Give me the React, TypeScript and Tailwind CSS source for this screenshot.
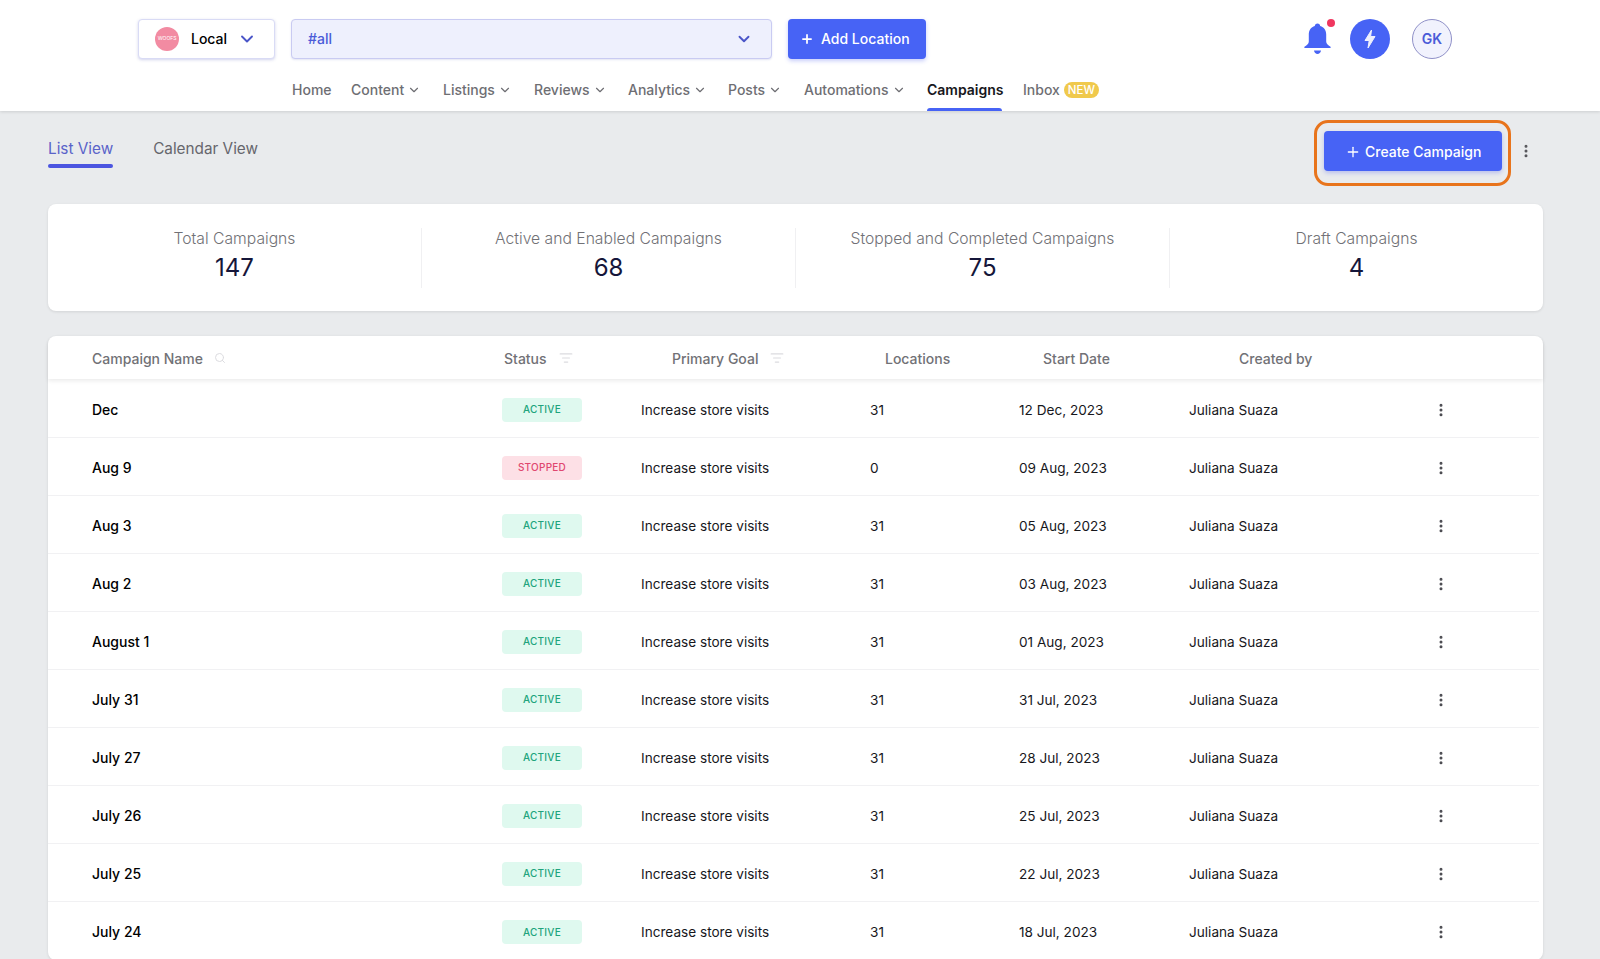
import React from 'react';
import { ChevronDown, Plus, Search, EllipsisVertical, ListFilter } from 'lucide-react';

const navItems = [
  { label: 'Home', width: 'w-[59px]' },
  { label: 'Content', caret: true, width: 'w-[92px]' },
  { label: 'Listings', caret: true, width: 'w-[91px]' },
  { label: 'Reviews', caret: true, width: 'w-[94px]' },
  { label: 'Analytics', caret: true, width: 'w-[100px]' },
  { label: 'Posts', caret: true, width: 'w-[76px]' },
  { label: 'Automations', caret: true, width: 'w-[123px]' },
];

const stats = [
  { label: 'Total Campaigns', value: '147' },
  { label: 'Active and Enabled Campaigns', value: '68' },
  { label: 'Stopped and Completed Campaigns', value: '75' },
  { label: 'Draft Campaigns', value: '4' },
];

const rows = [
  { name: 'Dec', status: 'ACTIVE', locations: '31', date: '12 Dec, 2023' },
  { name: 'Aug 9', status: 'STOPPED', locations: '0', date: '09 Aug, 2023' },
  { name: 'Aug 3', status: 'ACTIVE', locations: '31', date: '05 Aug, 2023' },
  { name: 'Aug 2', status: 'ACTIVE', locations: '31', date: '03 Aug, 2023' },
  { name: 'August 1', status: 'ACTIVE', locations: '31', date: '01 Aug, 2023' },
  { name: 'July 31', status: 'ACTIVE', locations: '31', date: '31 Jul, 2023' },
  { name: 'July 27', status: 'ACTIVE', locations: '31', date: '28 Jul, 2023' },
  { name: 'July 26', status: 'ACTIVE', locations: '31', date: '25 Jul, 2023' },
  { name: 'July 25', status: 'ACTIVE', locations: '31', date: '22 Jul, 2023' },
  { name: 'July 24', status: 'ACTIVE', locations: '31', date: '18 Jul, 2023' },
];

const App = () => {
  return (
    <div className="h-screen overflow-hidden bg-[#e9ebed] font-['Inter',sans-serif]">
      <header className="relative h-[111px] bg-white shadow-[0_1px_3px_rgba(0,0,0,0.12)]">
        <div className="flex h-[77px] items-start pt-[19px] pl-[138px]">
          <div className="flex h-10 w-[137px] items-center rounded border border-[#d9dbf5] bg-white pl-4 shadow-[0_1px_3px_rgba(70,80,180,0.25)]">
            <div className="flex h-6 w-6 items-center justify-center rounded-full bg-[#f28ba2] text-[5px] text-white">WOOFS</div>
            <span className="ml-3 text-sm font-medium text-black">Local</span>
            <ChevronDown className="ml-2.5 h-5 w-5 text-[#4a55c8]" strokeWidth={2.25} />
          </div>
          <div className="ml-4 flex h-10 w-[481px] items-center justify-between rounded border border-[#c9cbf2] bg-[#eef0fd] pr-[18px] pl-4 shadow-[0_1px_2px_rgba(70,80,180,0.15)]">
            <span className="text-sm font-medium text-[#4a5bd8]">#all</span>
            <ChevronDown className="h-[18px] w-[18px] text-[#4a55c8]" strokeWidth={2.5} />
          </div>
          <button className="ml-4 flex h-10 w-[138px] items-center gap-[7px] rounded bg-[#4763f5] pl-3 text-sm font-medium text-white shadow-[0_2px_4px_rgba(70,90,240,0.3)]">
            <Plus className="h-3.5 w-3.5" strokeWidth={3} />
            Add Location
          </button>
          <div className="relative ml-[378px] flex h-10 w-[27px] items-center justify-center">
            <svg viewBox="0 0 27 32" className="mt-[-1px] h-8 w-[27px] shrink-0 fill-[#4763f5]">
              <path d="M13.5 0.5c-1.6 0-2.6 1-2.7 2.6C7 4.2 4.8 7.5 4.8 11.5v7c0 2-1.6 3.8-4.3 5.3-.5.3-.3 1.2.4 1.2h25.2c.7 0 .9-.9.4-1.2-2.7-1.5-4.3-3.3-4.3-5.3v-7c0-4-2.2-7.3-6-8.4C16.1 1.5 15.1.5 13.5.5z" />
              <path d="M10 27.5h7c-.3 2-1.8 3.5-3.5 3.5S10.3 29.5 10 27.5z" />
            </svg>
            <span className="absolute top-0 right-[-4px] h-2 w-2 rounded-full bg-[#f0375f]" />
          </div>
          <div className="ml-[19px] flex h-10 w-10 items-center justify-center rounded-full bg-[#4763f5]">
            <svg viewBox="0 0 12 20" className="h-5 w-3 fill-[#eef0fd] stroke-[#eef0fd]" strokeLinejoin="round">
              <path d="M7.5 1 1 11.5h4.2L4 19l7-11.5H6.6z" />
            </svg>
          </div>
          <div className="ml-[22px] flex h-10 w-10 items-center justify-center rounded-full border border-[#8f90c8] bg-[#f1f2fd] text-sm font-semibold text-[#4a5bd8]">GK</div>
        </div>
        <nav className="flex h-[34px] pl-[292px]">
          {navItems.map((item) => (
            <div key={item.label} className={`flex h-[26px] items-center text-sm font-medium text-[#6e6e73] ${item.width}`}>
              {item.label}
              {item.caret && <ChevronDown className="ml-[3px] h-3.5 w-3.5" />}
            </div>
          ))}
          <div className="flex h-[34px] w-[75px] flex-col justify-between">
            <span className="flex h-[26px] items-center text-sm font-semibold whitespace-nowrap text-[#17171c]">Campaigns</span>
            <span className="h-[3px] rounded-t bg-[#4763f5]" />
          </div>
          <div className="ml-[21px] flex h-[26px] items-center text-sm font-medium text-[#6e6e73]">
            Inbox
            <span className="ml-1 rounded-full bg-[#f0c94c] px-1 text-[11.5px] leading-4 text-white">NEW</span>
          </div>
        </nav>
      </header>

      <div className="pr-[57px] pl-12">
        <div className="flex h-[93px] items-start justify-between">
          <div className="flex gap-10 pt-6">
            <div className="flex h-[33px] flex-col justify-between">
              <span className="pt-px text-[15.3px] leading-[26px] text-[#5a63c9]">List View</span>
              <span className="h-1 rounded bg-[#4b55e0]" />
            </div>
            <span className="pt-px text-[15.3px] leading-[26px] text-[#66666c]">Calendar View</span>
          </div>
          <div className="flex items-start pt-[9px]">
            <div className="rounded-[14px] border-[3px] border-[#e8741c] pt-2 pr-[6px] pb-3 pl-[7px]">
              <button className="flex h-10 w-[178px] items-center gap-1 rounded bg-[#4763f5] pt-px pl-[21px] text-sm font-medium text-white shadow-[0_2px_4px_rgba(70,90,240,0.3)]">
                <Plus className="h-4 w-4" strokeWidth={2} />
                Create Campaign
              </button>
            </div>
            <EllipsisVertical className="mt-[23px] mr-[9px] ml-[7px] h-4 w-4 text-[#55555a]" strokeWidth={2.5} />
          </div>
        </div>

        <div className="flex h-[107px] items-center rounded-lg bg-white shadow-[0_1px_3px_rgba(0,0,0,0.1)]">
          {stats.map((stat, index) => (
            <div key={stat.label} className={`flex h-[60px] flex-1 flex-col items-center justify-center pb-[3px] ${index < 3 ? 'border-r border-[#f0f0f2]' : ''}`}>
              <span className="mt-[-2px] pb-px text-[15.7px] leading-6 font-light text-[#717176]">{stat.label}</span>
              <span className="text-2xl leading-8 text-[#15163a]">{stat.value}</span>
            </div>
          ))}
        </div>

        <div className="mt-[25px] rounded-lg bg-white shadow-[0_1px_3px_rgba(0,0,0,0.1)]">
          <div className="grid h-[43px] grid-cols-[412px_168px_213px_158px_196px_1fr] items-center rounded-t-lg pt-[2px] pl-11 text-sm font-medium text-[#717176] shadow-[0_2px_4px_rgba(0,0,0,0.08)]">
            <div className="flex items-center gap-[11px]">
              Campaign Name
              <Search className="mb-0.5 h-3 w-3 text-[#dcdce0]" />
            </div>
            <div className="flex items-center gap-3">
              Status
              <ListFilter className="mb-0.5 h-3.5 w-3.5 text-[#dcdce0]" />
            </div>
            <div className="flex items-center gap-3">
              Primary Goal
              <ListFilter className="mb-0.5 h-3.5 w-3.5 text-[#dcdce0]" />
            </div>
            <div>Locations</div>
            <div>Start Date</div>
            <div>Created by</div>
          </div>
          <div className="pt-px">
            {rows.map((row, index) => (
              <div key={row.name} className={`mr-[4px] grid h-[58px] grid-cols-[410px_139px_229px_149px_170px_244px_1fr] items-center pt-[2px] pl-11 text-[13.6px] text-[#17171c] ${index < rows.length - 1 ? 'border-b border-[#f1f1f3]' : ''}`}>
                <div className="text-sm font-medium text-black">{row.name}</div>
                <div>
                  <span className={`flex h-6 w-20 items-center justify-center rounded text-[10px] font-medium tracking-wide ${row.status === 'ACTIVE' ? 'bg-[#dff9ef] text-[#21a47c]' : 'bg-[#fde0e6] text-[#e0476f]'}`}>
                    {row.status}
                  </span>
                </div>
                <div className="pt-px">Increase store visits</div>
                <div className="pt-px">{row.locations}</div>
                <div className="pt-px">{row.date}</div>
                <div className="pt-px">Juliana Suaza</div>
                <EllipsisVertical className="h-4 w-4 text-[#4a4a50]" strokeWidth={2.5} />
              </div>
            ))}
          </div>
        </div>
      </div>
    </div>
  );
};

export default App;
